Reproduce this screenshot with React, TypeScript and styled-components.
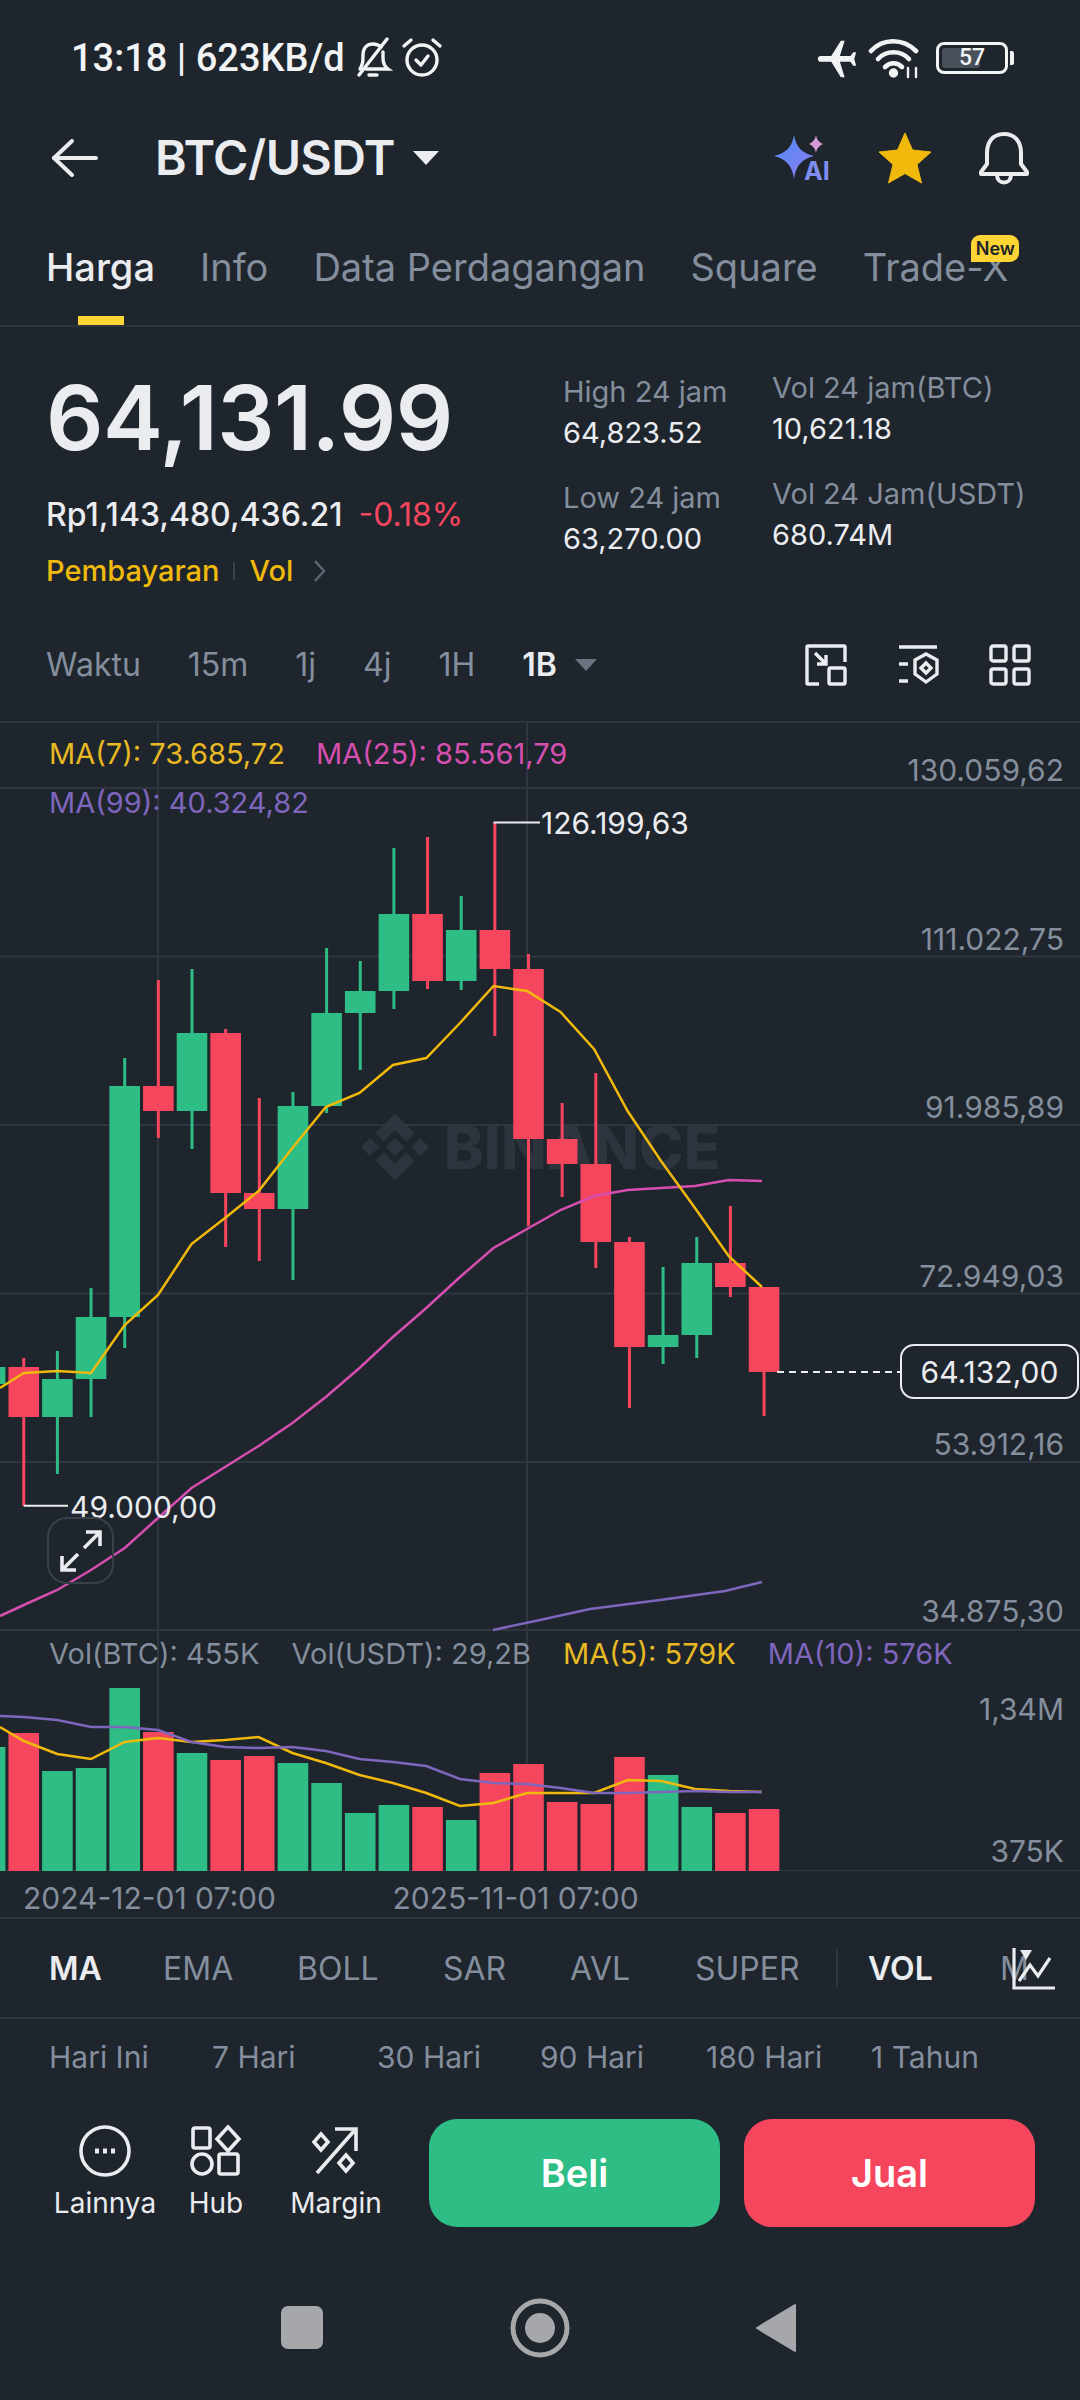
import React from 'react';
import styled, { createGlobalStyle } from 'styled-components';

const bg = '#1e252d';
const green = '#2ebd85';
const red = '#f6465d';
const grid = '#2f3640';
const muted = '#848e9c';
const light = '#eaecef';
const yellow = '#f0b90b';
const pink = '#d64fb0';
const purple = '#7e66bd';

const GlobalStyle = createGlobalStyle`
	html, body {
		margin: 0;
		padding: 0;
		background: ${bg};
	}
	* {
		box-sizing: border-box;
	}
`;

const Page = styled.div`
	width: 1080px;
	height: 2400px;
	overflow: hidden;
	display: flex;
	flex-direction: column;
	background: ${bg};
	color: ${light};
	font-family: Inter, 'Liberation Sans', sans-serif;
`;

const StatusBar = styled.div`
	height: 115px;
	padding: 0 66px 0 71px;
	display: flex;
	align-items: center;
	font-family: Roboto, sans-serif;
	font-size: 38px;
	font-weight: 500;
	color: #f2f3f5;
`;

const StatusIcons = styled.div`
	margin-left: ${(p: { $left: number }) => p.$left}px;
	display: flex;
	align-items: center;
	gap: 8px;
`;

const Spacer = styled.div`
	flex: 1;
`;

const BatteryBox = styled.div`
	width: 72px;
	height: 32px;
	padding: 3px;
	border: 3px solid #f2f3f5;
	border-radius: 8px;
	position: relative;
	display: flex;
	align-items: center;
	justify-content: center;
	font-size: 23px;
	font-weight: 500;
`;

const BatteryLevel = styled.div`
	position: absolute;
	left: 3px;
	top: 3px;
	bottom: 3px;
	width: 57%;
	border-radius: 3px;
	background: #4a5059;
`;

const BatteryValue = styled.span`
	position: relative;
`;

const BatteryCap = styled.div`
	width: 4px;
	height: 14px;
	margin-left: 2px;
	background: #f2f3f5;
	border-radius: 0 2px 2px 0;
`;

const HeaderBar = styled.div`
	height: 85px;
	padding: 0 50px 0 52px;
	display: flex;
	align-items: center;
`;

const PairTitle = styled.div`
	margin-left: 57px;
	font-size: 48px;
	font-weight: 600;
	letter-spacing: -0.5px;
`;

const Caret = styled.div<{ $size: number; $color: string }>`
	width: 0;
	height: 0;
	border-left: ${(p) => p.$size}px solid transparent;
	border-right: ${(p) => p.$size}px solid transparent;
	border-top: ${(p) => p.$size * 1.15}px solid ${(p) => p.$color};
`;

const HeaderActions = styled.div`
	display: flex;
	align-items: center;
	gap: 46px;
`;

const TabBar = styled.div`
	height: 127px;
	padding: 0 0 0 46px;
	display: flex;
	align-items: flex-start;
	border-bottom: 2px solid #2d343d;
`;

const Tab = styled.div<{ $left: number; $active?: boolean }>`
	position: relative;
	margin-left: ${(p) => p.$left}px;
	padding-top: 44px;
	height: 125px;
	font-size: 38px;
	font-weight: ${(p) => (p.$active ? 500 : 400)};
	color: ${(p) => (p.$active ? light : muted)};
	white-space: nowrap;
`;

const TabMarker = styled.div`
	position: absolute;
	left: 32px;
	bottom: 0;
	width: 46px;
	height: 9px;
	background: #fcd535;
`;

const NewBadge = styled.div`
	position: absolute;
	right: -11px;
	top: 35px;
	width: 48px;
	height: 27px;
	border-radius: 9px 9px 9px 0;
	background: #fcd535;
	color: #1e2329;
	font-size: 18px;
	font-weight: 600;
	display: flex;
	align-items: center;
	justify-content: center;
`;

const Summary = styled.div`
	height: 293px;
	display: flex;
`;

const PriceBlock = styled.div`
	width: 563px;
	padding: 38px 0 0 46px;
`;

const MainPrice = styled.div`
	font-size: 90px;
	font-weight: 600;
	line-height: 106px;
	letter-spacing: -0.5px;
`;

const FiatRow = styled.div`
	margin-top: 24px;
	display: flex;
	align-items: center;
	gap: 16px;
	font-size: 32px;
	line-height: 40px;
	font-weight: 500;
`;

const Change = styled.span`
	color: ${red};
	font-weight: 400;
`;

const PayRow = styled.div`
	margin-top: 18px;
	display: flex;
	align-items: center;
	font-size: 29px;
	font-weight: 500;
	color: ${yellow};
`;

const PayDivider = styled.div`
	width: 2px;
	height: 18px;
	margin: 0 14px;
	background: #3a414b;
`;

const StatColumn = styled.div<{ $top: number; $width: number }>`
	width: ${(p) => p.$width}px;
	padding-top: ${(p) => p.$top}px;
	display: flex;
	flex-direction: column;
	gap: 28px;
`;

const Stat = styled.div`
	display: flex;
	flex-direction: column;
	gap: 4px;
	font-size: 29px;
	line-height: 37px;
`;

const StatLabel = styled.div`
	color: ${muted};
	white-space: nowrap;
`;

const StatValue = styled.div`
	color: ${light};
`;

const TimeRow = styled.div`
	height: 103px;
	padding: 0 49px 12px 46px;
	display: flex;
	align-items: center;
	border-bottom: 2px solid #2d343d;
	font-size: 32px;
	color: ${muted};
`;

const TimeItem = styled.div<{ $left: number; $active?: boolean }>`
	margin-left: ${(p) => p.$left}px;
	color: ${(p) => (p.$active ? light : muted)};
	font-weight: ${(p) => (p.$active ? 600 : 400)};
`;

const TimeTools = styled.div`
	display: flex;
	gap: 50px;
`;

const ChartArea = styled.div`
	position: relative;
	height: 1148px;
	flex-shrink: 0;
`;

const ChartSvg = styled.svg`
	position: absolute;
	left: 0;
	top: 0;
`;

const Legend = styled.div<{ $top: number; $left: number }>`
	position: absolute;
	top: ${(p) => p.$top - 723}px;
	left: ${(p) => p.$left}px;
	height: 40px;
	display: flex;
	align-items: center;
	font-size: 29px;
	white-space: nowrap;
`;

const LegendItem = styled.span<{ $color: string; $left?: number }>`
	color: ${(p) => p.$color};
	margin-left: ${(p) => p.$left ?? 0}px;
`;

const AxisLabel = styled.div<{ $center: number }>`
	position: absolute;
	right: 16px;
	top: ${(p) => p.$center - 723 - 20}px;
	height: 40px;
	line-height: 40px;
	font-size: 30px;
	color: ${muted};
`;

const PeakLabel = styled.div<{ $center: number; $left: number }>`
	position: absolute;
	left: ${(p) => p.$left}px;
	top: ${(p) => p.$center - 723 - 20}px;
	height: 40px;
	line-height: 40px;
	font-size: 30px;
	color: ${light};
`;

const LastPriceTag = styled.div`
	position: absolute;
	left: 900px;
	top: ${1344 - 723}px;
	width: 179px;
	height: 55px;
	border: 2px solid ${light};
	border-radius: 14px;
	background: ${bg};
	display: flex;
	align-items: center;
	justify-content: center;
	font-size: 30px;
	color: ${light};
`;

const Watermark = styled.div`
	position: absolute;
	left: 360px;
	top: ${1112 - 723}px;
	display: flex;
	align-items: center;
	gap: 14px;
	font-size: 60px;
	font-weight: 800;
	line-height: 70px;
	color: #2d343d;
`;

const ExpandButton = styled.div`
	position: absolute;
	left: 47px;
	top: ${1517 - 723}px;
	width: 67px;
	height: 67px;
	border: 2px solid #3a3f48;
	border-radius: 20px;
	display: flex;
	align-items: center;
	justify-content: center;
`;

const DateRow = styled.div`
	height: 48px;
	padding: 8px 0 0 23px;
	display: flex;
	font-size: 30px;
	line-height: 38px;
	color: ${muted};
	border-bottom: 2px solid #2d343d;
	flex-shrink: 0;
`;

const DateLabel = styled.div`
	width: 369.5px;
`;

const IndicatorRow = styled.div`
	position: relative;
	height: 100px;
	padding-left: 49px;
	display: flex;
	align-items: center;
	font-size: 32px;
	color: ${muted};
	border-bottom: 2px solid #2d343d;
	flex-shrink: 0;
`;

const Indicator = styled.div<{ $width: number; $active?: boolean }>`
	width: ${(p) => p.$width}px;
	color: ${(p) => (p.$active ? light : muted)};
	font-weight: ${(p) => (p.$active ? 600 : 400)};
`;

const IndicatorDivider = styled.div`
	width: 2px;
	height: 36px;
	margin-right: 30px;
	background: #2f3640;
`;

const IndicatorTool = styled.div`
	position: absolute;
	right: 24px;
	top: 28px;
`;

const PeriodRow = styled.div`
	height: 100px;
	display: flex;
	flex-direction: column;
	flex-shrink: 0;
`;

const PeriodGrid = styled.div`
	height: 71px;
	overflow: hidden;
	padding: 18px 0 0 49px;
	display: grid;
	grid-template-columns: 163px 165px 163px 166px 165px auto;
	row-gap: 5px;
	font-size: 30px;
	line-height: 40px;
`;

const PeriodLabel = styled.div`
	color: ${muted};
`;

const PeriodValue = styled.div<{ $up?: boolean }>`
	color: ${(p) => (p.$up ? green : red)};
	padding-left: 14px;
`;

const ActionBar = styled.div`
	height: 108px;
	padding: 0 45px 0 54px;
	display: flex;
	align-items: stretch;
	flex-shrink: 0;
`;

const ActionLink = styled.div<{ $width: number }>`
	width: ${(p) => p.$width}px;
	display: flex;
	flex-direction: column;
	align-items: center;
	font-size: 28px;
	line-height: 36px;
	padding-top: 6px;
	gap: 8px;
	color: ${light};
`;

const TradeButton = styled.div<{ $color: string; $left: number }>`
	width: 291px;
	margin-left: ${(p) => p.$left}px;
	border-radius: 28px;
	background: ${(p) => p.$color};
	display: flex;
	align-items: center;
	justify-content: center;
	font-size: 38px;
	font-weight: 600;
	color: #fff;
`;

const NavBar = styled.div`
	flex: 1;
	padding: 79px 0 0 281px;
	display: flex;
	align-items: flex-start;
`;

const NavSquare = styled.div`
	width: 42px;
	height: 43px;
	border-radius: 7px;
	background: #a6a7ab;
`;

type Candle = [number, number, number, number, boolean];

// open-top, body-bottom, wick-top, wick-bottom, green
const candles: Candle[] = [
	[1367, 1384, 1367, 1384, true],
	[1367, 1417, 1358, 1506, false],
	[1379, 1417, 1351, 1474, true],
	[1317, 1379, 1288, 1417, true],
	[1086, 1317, 1058, 1348, true],
	[1086, 1111, 980, 1138, false],
	[1033, 1111, 969, 1149, true],
	[1033, 1193, 1029, 1247, false],
	[1193, 1209, 1098, 1261, false],
	[1106, 1209, 1092, 1280, true],
	[1013, 1106, 948, 1113, true],
	[991, 1013, 961, 1070, true],
	[914, 991, 848, 1009, true],
	[914, 981, 837, 989, false],
	[930, 981, 896, 990, true],
	[930, 969, 822, 1036, false],
	[969, 1139, 954, 1226, false],
	[1139, 1164, 1103, 1197, false],
	[1164, 1242, 1073, 1268, false],
	[1242, 1347, 1237, 1408, false],
	[1335, 1347, 1267, 1364, true],
	[1263, 1335, 1237, 1358, true],
	[1263, 1287, 1206, 1297, false],
	[1287, 1372, 1287, 1416, false],
];

const barTops = [
	1747, 1733, 1771, 1768, 1688, 1732, 1753, 1760, 1756, 1763, 1783, 1813, 1805, 1807, 1820, 1773,
	1764, 1802, 1804, 1757, 1775, 1807, 1813, 1809,
];

const candleX = (i: number) => -9.9 + i * 33.65;

const ma7 =
	'0,1388 23.8,1373 57.3,1371 91,1373 124.7,1325 158,1295 191.5,1244 225,1218 258.6,1191 292.4,1148 325.8,1107 359.5,1093 392.9,1065 426.3,1058 460,1023 493.5,986 527,991 560.5,1012 594,1049 627.6,1111 661,1161 695,1208 728.6,1256 762,1287';
const ma25 =
	'0,1616 23.8,1605 57.3,1590 91,1570 124.7,1548 158,1518 191.5,1488 225,1467 258.6,1446 292.4,1423 325.8,1397 359.5,1368 392.9,1337 426.3,1308 460,1277 493.5,1248 527,1229 560.5,1210 594,1196 627.6,1190 661,1188 695,1186 728.6,1180 762,1181';
const ma99 = '493,1630 540,1620 590,1609 660,1600 725,1591 762,1582';
const volMa5 =
	'0,1727 23.8,1741 57.3,1754 91,1759 124.7,1742 158,1738 191.5,1742 225,1740 258.6,1737 292.4,1753 325.8,1763 359.5,1775 392.9,1783 426.3,1793 460,1806 493.5,1803 527,1793 560.5,1793 594,1793 627.8,1780 661,1781 695,1789 729,1791 762,1792';
const volMa10 =
	'0,1716 23.8,1717 57.3,1720 91,1727 124.7,1727 158,1730 191.5,1742 225,1747 258.6,1748 292.4,1747 325.8,1751 359.5,1759 392.9,1762 426.3,1766 460,1779 493.5,1783 527,1784 560.5,1788 594,1793 627.8,1793 661,1792 695,1791 729,1792 762,1792';

const StarIcon = () => (
	<svg width="54" height="52" viewBox="0 0 54 52">
		<path
			d="M27 1 L34.5 18 L53 20 L39 32.5 L43.5 51 L27 41.5 L10.5 51 L15 32.5 L1 20 L19.5 18 Z"
			fill={yellow}
			stroke={yellow}
			strokeLinejoin="round"
		/>
	</svg>
);

const BellIcon = () => (
	<svg width="52" height="54" viewBox="0 0 52 54" fill="none" stroke={light} strokeWidth="4" strokeLinejoin="round">
		<path d="M26 3 C14 3 9 12 9 22 V33 L3 41 V43 H49 V41 L43 33 V22 C43 12 38 3 26 3 Z" />
		<path d="M19 44 C19 54 33 54 33 44" />
	</svg>
);

const AiIcon = () => (
	<svg width="58" height="46" viewBox="0 0 58 46">
		<defs>
			<linearGradient id="ai" x1="0" y1="0" x2="1" y2="1">
				<stop offset="0" stopColor="#4f8df5" />
				<stop offset="1" stopColor="#8d7bf0" />
			</linearGradient>
		</defs>
		<path d="M20 0 C22 12 28 18 40 21 C28 24 22 30 20 44 C18 30 12 24 0 21 C12 18 18 12 20 0 Z" fill="url(#ai)" />
		<path d="M42 0 C43 5 45 7 49 9 C45 11 43 13 42 18 C41 13 39 11 35 9 C39 7 41 5 42 0 Z" fill="#d79ad8" />
		<text x="30" y="45" fontFamily="Inter, sans-serif" fontWeight="700" fontSize="25" fill="#7f8df0">
			AI
		</text>
	</svg>
);

const App = () => {
	const toY = 723;
	return (
		<Page>
			<GlobalStyle />
			<StatusBar>
				13:18 | 623KB/d
				<StatusIcons $left={6}>
					<svg width="42" height="42" viewBox="0 0 42 42" fill="none" stroke="#f2f3f5" strokeWidth="3.4" strokeLinecap="round">
						<path d="M9 32 C12 27 12 24 12 18 C12 11 16 7 22 7 C25 7 28 8 30 10" />
						<path d="M32 15 V21 C32 26 33 29 37 32 H15" />
						<path d="M36 2 L8 38" />
						<path d="M18 38 H26" />
					</svg>
					<svg width="42" height="42" viewBox="0 0 42 42" fill="none" stroke="#f2f3f5" strokeWidth="3.4" strokeLinecap="round" strokeLinejoin="round">
						<circle cx="21" cy="23" r="15" />
						<path d="M15 23 L20 28 L27 19" />
						<path d="M3 9 L10 3" />
						<path d="M39 9 L32 3" />
					</svg>
				</StatusIcons>
				<Spacer />
				<StatusIcons $left={0}>
					<svg width="46" height="46" viewBox="0 0 24 24" fill="#f2f3f5">
						<path
							transform="rotate(-90 12 12)"
							d="M21 16v-2l-8-5V3.5c0-.83-.67-1.5-1.5-1.5S10 2.67 10 3.5V9l-8 5v2l8-2.5V19l-2 1.5V22l3.5-1 3.5 1v-1.5L13 19v-5.5l8 2.5z"
						/>
					</svg>
					<svg width="54" height="42" viewBox="0 0 54 42" fill="none" stroke="#f2f3f5" strokeWidth="4.6" strokeLinecap="round">
						<path d="M3 14 C15 1 35 1 48 14" />
						<path d="M10 22 C18 13 33 13 41 22" />
						<path d="M17 30 C22 25 29 25 34 30" />
						<circle cx="25.5" cy="36" r="2.4" fill="#f2f3f5" />
						<path d="M40 40 V31 M48 40 V31" strokeWidth="2.4" />
					</svg>
				</StatusIcons>
				<BatteryHolder />
			</StatusBar>

			<HeaderBar>
				<svg width="46" height="38" viewBox="0 0 46 38" fill="none" stroke={light} strokeWidth="4" strokeLinecap="round" strokeLinejoin="round">
					<path d="M2 19 H44" />
					<path d="M20 2 L2 19 L20 36" />
				</svg>
				<PairTitle>BTC/USDT</PairTitle>
				<CaretSlot>
					<Caret $size={13} $color={light} />
				</CaretSlot>
				<Spacer />
				<HeaderActions>
					<AiIcon />
					<StarIcon />
					<BellIcon />
				</HeaderActions>
			</HeaderBar>

			<TabBar>
				<Tab $left={0} $active>
					Harga
					<TabMarker />
				</Tab>
				<Tab $left={45}>Info</Tab>
				<Tab $left={45}>Data Perdagangan</Tab>
				<Tab $left={45}>Square</Tab>
				<Tab $left={45}>
					Trade-X
					<NewBadge>New</NewBadge>
				</Tab>
			</TabBar>

			<Summary>
				<PriceBlock>
					<MainPrice>64,131.99</MainPrice>
					<FiatRow>
						Rp1,143,480,436.21
						<Change>-0.18%</Change>
					</FiatRow>
					<PayRow>
						Pembayaran
						<PayDivider />
						Vol
						<svg width="14" height="24" viewBox="0 0 14 24" fill="none" stroke="#5e6673" strokeWidth="2.4" style={{ marginLeft: 20 }}>
							<path d="M2 2 L11 12 L2 22" />
						</svg>
					</PayRow>
				</PriceBlock>
				<StatColumn $top={46} $width={209}>
					<Stat>
						<StatLabel>High 24 jam</StatLabel>
						<StatValue>64,823.52</StatValue>
					</Stat>
					<Stat>
						<StatLabel>Low 24 jam</StatLabel>
						<StatValue>63,270.00</StatValue>
					</Stat>
				</StatColumn>
				<StatColumn $top={42} $width={308}>
					<Stat>
						<StatLabel>Vol 24 jam(BTC)</StatLabel>
						<StatValue>10,621.18</StatValue>
					</Stat>
					<Stat>
						<StatLabel>Vol 24 Jam(USDT)</StatLabel>
						<StatValue>680.74M</StatValue>
					</Stat>
				</StatColumn>
			</Summary>

			<TimeRow>
				<TimeItem $left={0}>Waktu</TimeItem>
				<TimeItem $left={47}>15m</TimeItem>
				<TimeItem $left={47}>1j</TimeItem>
				<TimeItem $left={47}>4j</TimeItem>
				<TimeItem $left={47}>1H</TimeItem>
				<TimeItem $left={47} $active>
					1B
				</TimeItem>
				<CaretSlot>
					<Caret $size={11} $color="#6b7380" />
				</CaretSlot>
				<Spacer />
				<TimeTools>
					<svg width="42" height="42" viewBox="0 0 42 42" fill="none" stroke={light} strokeWidth="3.4">
						<path d="M14 40 H3 Q2 40 2 39 V3 Q2 2 3 2 H39 Q40 2 40 3 V18" />
						<rect x="24" y="24" width="16" height="16" rx="1.5" />
						<path d="M10 9 L21 20 M21 11 V20 H12" />
					</svg>
					<svg width="42" height="42" viewBox="0 0 42 42" fill="none" stroke={light} strokeWidth="3.4">
						<path d="M2 3 H40 M2 20 H11 M2 37 H11" />
						<path d="M29 10 L40 16 V30 L29 38 L18 30 V16 Z" />
						<path d="M29 19 L34 24 L29 29 L24 24 Z" />
					</svg>
					<svg width="42" height="42" viewBox="0 0 42 42" fill="none" stroke={light} strokeWidth="3.4">
						<rect x="2" y="2" width="15" height="15" rx="2" />
						<rect x="25" y="2" width="15" height="15" rx="2" />
						<rect x="2" y="25" width="15" height="15" rx="2" />
						<rect x="25" y="25" width="15" height="15" rx="2" />
					</svg>
				</TimeTools>
			</TimeRow>

			<ChartArea>
				<Watermark>
					<svg width="70" height="70" viewBox="0 0 100 100" fill="#2d343d">
						<polygon points="50,2 78,30 66,42 50,26 34,42 22,30" />
						<polygon points="50,98 78,70 66,58 50,74 34,58 22,70" />
						<polygon points="50,37 63,50 50,63 37,50" />
						<polygon points="14,37 27,50 14,63 1,50" />
						<polygon points="86,37 99,50 86,63 73,50" />
					</svg>
					BINANCE
				</Watermark>
				<ChartSvg width="1080" height="1148" viewBox={`0 ${toY} 1080 1148`}>
					{[788, 956.5, 1125, 1293.4, 1462, 1630].map((y) => (
						<line key={y} x1="0" x2="1080" y1={y} y2={y} stroke={grid} strokeWidth="2" />
					))}
					<line x1="0" x2="1080" y1="1871" y2="1871" stroke={grid} strokeWidth="2" />
					{[158, 527].map((x) => (
						<line key={x} x1={x} x2={x} y1="723" y2="1871" stroke={grid} strokeWidth="2" />
					))}
					{candles.map(([top, bottom, wickTop, wickBottom, up], i) => (
						<g key={i} fill={up ? green : red}>
							<rect x={candleX(i) - 1.5} y={wickTop} width="3" height={wickBottom - wickTop} />
							<rect x={candleX(i) - 15.3} y={top} width="30.6" height={bottom - top} />
						</g>
					))}
					{barTops.map((top, i) => (
						<rect
							key={i}
							x={candleX(i) - 15.3}
							y={top}
							width="30.6"
							height={1871 - top}
							fill={candles[i][4] ? green : red}
						/>
					))}
					<polyline points={ma99} fill="none" stroke={purple} strokeWidth="2.5" />
					<polyline points={ma25} fill="none" stroke={pink} strokeWidth="2.5" />
					<polyline points={ma7} fill="none" stroke="#f0b90b" strokeWidth="2.5" />
					<polyline points={volMa5} fill="none" stroke="#f0b90b" strokeWidth="2.5" />
					<polyline points={volMa10} fill="none" stroke={purple} strokeWidth="2.5" />
					<path d="M493.5 822.5 H540 M23.8 1505.7 H68" stroke={light} strokeWidth="2" fill="none" />
					<path d="M777 1372 H900" stroke={light} strokeWidth="2" strokeDasharray="7 5" fill="none" />
				</ChartSvg>

				<Legend $top={733} $left={49}>
					<LegendItem $color="#e8b923">MA(7): 73.685,72</LegendItem>
					<LegendItem $color={pink} $left={31}>
						MA(25): 85.561,79
					</LegendItem>
				</Legend>
				<Legend $top={782} $left={49}>
					<LegendItem $color={purple}>MA(99): 40.324,82</LegendItem>
				</Legend>
				<Legend $top={1633} $left={49}>
					<LegendItem $color={muted}>Vol(BTC): 455K</LegendItem>
					<LegendItem $color={muted} $left={32}>
						Vol(USDT): 29,2B
					</LegendItem>
					<LegendItem $color="#e8b923" $left={32}>
						MA(5): 579K
					</LegendItem>
					<LegendItem $color={purple} $left={32}>
						MA(10): 576K
					</LegendItem>
				</Legend>

				<AxisLabel $center={770}>130.059,62</AxisLabel>
				<AxisLabel $center={939}>111.022,75</AxisLabel>
				<AxisLabel $center={1107}>91.985,89</AxisLabel>
				<AxisLabel $center={1276}>72.949,03</AxisLabel>
				<AxisLabel $center={1444}>53.912,16</AxisLabel>
				<AxisLabel $center={1611}>34.875,30</AxisLabel>
				<AxisLabel $center={1709}>1,34M</AxisLabel>
				<AxisLabel $center={1851}>375K</AxisLabel>

				<PeakLabel $center={823} $left={541}>
					126.199,63
				</PeakLabel>
				<PeakLabel $center={1507} $left={70}>
					49.000,00
				</PeakLabel>
				<LastPriceTag>64.132,00</LastPriceTag>
				<ExpandButton>
					<svg width="44" height="44" viewBox="0 0 44 44" fill="none" stroke={light} strokeWidth="3.6">
						<path d="M25 19 L41 3 M27 3 H41 V17" />
						<path d="M19 25 L3 41 M3 27 V41 H17" />
					</svg>
				</ExpandButton>
			</ChartArea>

			<DateRow>
				<DateLabel>2024-12-01 07:00</DateLabel>
				<DateLabel>2025-11-01 07:00</DateLabel>
			</DateRow>

			<IndicatorRow>
				<Indicator $width={114} $active>
					MA
				</Indicator>
				<Indicator $width={134}>EMA</Indicator>
				<Indicator $width={146}>BOLL</Indicator>
				<Indicator $width={127}>SAR</Indicator>
				<Indicator $width={125}>AVL</Indicator>
				<Indicator $width={141}>SUPER</Indicator>
				<IndicatorDivider />
				<Indicator $width={132} $active>
					VOL
				</Indicator>
				<Indicator $width={12}>M</Indicator>
				<IndicatorTool>
					<svg width="44" height="44" viewBox="0 0 44 44" fill="none" stroke={light} strokeWidth="3.2">
						<path d="M2 1 V41 H43" />
						<path d="M7 34 L18 18 L26 29 L38 11" />
						<polygon points="8,3 20,3 14,13" fill={light} stroke="none" />
					</svg>
				</IndicatorTool>
			</IndicatorRow>

			<PeriodRow>
				<PeriodGrid>
					<PeriodLabel>Hari Ini</PeriodLabel>
					<PeriodLabel>7 Hari</PeriodLabel>
					<PeriodLabel>30 Hari</PeriodLabel>
					<PeriodLabel>90 Hari</PeriodLabel>
					<PeriodLabel>180 Hari</PeriodLabel>
					<PeriodLabel>1 Tahun</PeriodLabel>
					<PeriodValue>-0.23%</PeriodValue>
					<PeriodValue $up>0.30%</PeriodValue>
					<PeriodValue>-10.20%</PeriodValue>
					<PeriodValue>-3.12%</PeriodValue>
					<PeriodValue>-27.14%</PeriodValue>
					<PeriodValue>-28.22%</PeriodValue>
				</PeriodGrid>
			</PeriodRow>

			<ActionBar>
				<ActionLink $width={102}>
					<svg width="52" height="52" viewBox="0 0 52 52" fill="none" stroke={light} strokeWidth="3.6">
						<circle cx="26" cy="26" r="24" />
						<path d="M16 26 H20 M24 26 H28 M32 26 H36" strokeWidth="5" />
					</svg>
					Lainnya
				</ActionLink>
				<ActionLink $width={120}>
					<svg width="52" height="52" viewBox="0 0 52 52" fill="none" stroke={light} strokeWidth="3.6">
						<rect x="3" y="3" width="17" height="20" rx="2" />
						<path d="M38 2 L49 14 L38 26 L27 14 Z" />
						<circle cx="12" cy="39" r="10" />
						<rect x="29" y="29" width="19" height="20" rx="2" />
					</svg>
					Hub
				</ActionLink>
				<ActionLink $width={120}>
					<svg width="52" height="52" viewBox="0 0 52 52" fill="none" stroke={light} strokeWidth="3.6">
						<path d="M7 48 L44 6" />
						<path d="M25 4 H46 V26" />
						<path d="M11 9 L18 17 L11 25 L4 17 Z" />
						<path d="M36 30 L43 38 L36 46 L29 38 Z" />
					</svg>
					Margin
				</ActionLink>
				<TradeButton $color={green} $left={33}>
					Beli
				</TradeButton>
				<TradeButton $color={red} $left={24}>
					Jual
				</TradeButton>
			</ActionBar>

			<NavBar>
				<NavSquare />
				<svg width="60" height="60" viewBox="0 0 60 60" style={{ marginLeft: 187, marginTop: -8 }}>
					<circle cx="30" cy="30" r="27" fill="none" stroke="#a6a7ab" strokeWidth="5" />
					<circle cx="30" cy="30" r="15" fill="#a6a7ab" />
				</svg>
				<svg width="42" height="50" viewBox="0 0 42 50" style={{ marginLeft: 185, marginTop: -3 }}>
					<path d="M40 2 V48 L2 25 Z" fill="#a6a7ab" stroke="#a6a7ab" strokeWidth="2" strokeLinejoin="round" />
				</svg>
			</NavBar>
		</Page>
	);
};

const CaretSlot = styled.div`
	margin-left: 18px;
	display: flex;
	align-items: center;
`;

const BatteryWrap = styled.div`
	margin-left: 14px;
	display: flex;
	align-items: center;
`;

const BatteryHolder = () => (
	<BatteryWrap>
		<BatteryBox>
			<BatteryLevel />
			<BatteryValue>57</BatteryValue>
		</BatteryBox>
		<BatteryCap />
	</BatteryWrap>
);

export default App;
